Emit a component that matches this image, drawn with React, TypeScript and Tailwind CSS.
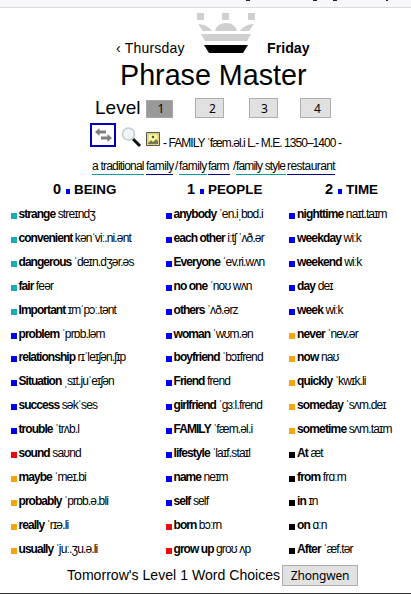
import React from "react";

type Entry = [string, string, string];
const T = "bg-[#14b0ae]", B = "bg-[#0000ee]", R = "bg-[#e80c10]", O = "bg-[#f9a40c]", K = "bg-black";

const being: Entry[] = [
  [T, "strange", "streɪndʒ"], [T, "convenient", "kənˈviː.ni.ənt"], [T, "dangerous", "ˈdeɪn.dʒər.əs"],
  [T, "fair", "feər"], [T, "Important", "ɪmˈpɔː.tənt"], [B, "problem", "ˈprɒb.ləm"],
  [B, "relationship", "rɪˈleɪʃən.ʃɪp"], [B, "Situation", "ˌsɪt.juˈeɪʃən"], [B, "success", "səkˈses"],
  [B, "trouble", "ˈtrʌb.l"], [R, "sound", "saʊnd"], [O, "maybe", "ˈmeɪ.bi"],
  [O, "probably", "ˈprɒb.ə.bli"], [O, "really", "ˈrɪə.li"], [O, "usually", "ˈjuː.ʒu.ə.li"],
];
const people: Entry[] = [
  [B, "anybody", "ˈen.iˌbɒd.i"], [B, "each other", "iːtʃ ˈʌð.ər"], [B, "Everyone", "ˈev.ri.wʌn"],
  [B, "no one", "ˈnoʊ wʌn"], [B, "others", "ˈʌð.ərz"], [B, "woman", "ˈwʊm.ən"],
  [B, "boyfriend", "ˈbɔɪfrend"], [B, "Friend", "frend"], [B, "girlfriend", "ˈɡɜːl.frend"],
  [B, "FAMILY", "ˈfæm.əl.i"], [B, "lifestyle", "ˈlaɪf.staɪl"], [B, "name", "neɪm"],
  [B, "self", "self"], [R, "born", "bɔːrn"], [R, "grow up", "groʊ ʌp"],
];
const time: Entry[] = [
  [B, "nighttime", "naɪt.taɪm"], [B, "weekday", "wiːk"], [B, "weekend", "wiːk"],
  [B, "day", "deɪ"], [B, "week", "wiːk"], [O, "never", "ˈnev.ər"],
  [O, "now", "naʊ"], [O, "quickly", "ˈkwɪk.li"], [O, "someday", "ˈsʌm.deɪ"],
  [O, "sometime", "sʌm.taɪm"], [K, "At", "æt"], [K, "from", "frɑːm"],
  [K, "in", "ɪn"], [K, "on", "ɑːn"], [K, "After", "ˈæf.tər"],
];

function Column({ items, gap, tracking }: { items: Entry[]; gap: string; tracking: string }) {
  return (
    <ul>
      {items.map(([color, word, ipa], i) => (
        <li key={i} className={"flex h-[23.93px] items-center whitespace-nowrap text-[12px] " + gap}>
          <i className={"mt-[4px] h-[6px] w-[6px] shrink-0 " + color} />
          <span><b className={tracking}>{word}</b><span className="tracking-[-0.85px]"> {ipa}</span></span>
        </li>
      ))}
    </ul>
  );
}

function Heading({ n, label, className }: { n: string; label: string; className: string }) {
  return (
    <h2 className={"flex h-6 items-center whitespace-nowrap text-[13.4px] font-bold " + className}>
      <span className="w-[9px] text-[14.5px]">{n}</span>
      <i className="mx-[4px] mt-[3px] h-[5px] w-[4px] bg-[#0000ee]" />
      {label}
    </h2>
  );
}

const level = "flex h-5 items-center justify-center border border-[#adadad] bg-[#e1e1e1] pt-px font-['Noto_Sans',sans-serif] text-[12px]";
const teal = "border-b border-[#00a0a0]";
const navy = "border-b border-[#000090]";

export default function App() {
  return (
    <main className="h-[594px] w-[411px] overflow-hidden bg-white font-['Liberation_Sans',Arial,sans-serif] text-black">
      <div className="flex h-2 border-b border-[#dcdcde] bg-[#f8f8fb] pl-[246px]">
        <i className="h-px w-1 bg-[#222]" />
        <i className="ml-[63px] h-px w-1 bg-[#222]" />
        <i className="ml-[16px] h-px w-1 bg-[#222]" />
        <i className="ml-[49px] h-px w-[2px] bg-[#222]" />
      </div>
      <header className="flex h-[48px] pl-[116px]">
        <span className="mt-[32px] w-[81px] whitespace-nowrap text-[14px] leading-4 tracking-[0.2px]">‹ Thursday</span>
        <svg className="mt-[4px] shrink-0" width="58" height="42" viewBox="0 0 58 42">
          <g fill="#cfcfcf"><path d="M0 1h7v7H0zM25 1h7v7h-7zM51 1h7v7h-7zM1 12q9 0 14 7H6zM57 12q-9 0-14 7h9zM18 19q2-8 11-8t11 8zM4 22h50l-4 7H8z" /></g>
          <path d="M7 33h44l-5 8H12z" />
        </svg>
        <b className="ml-[12px] mt-[32px] text-[14.2px] leading-4">Friday</b>
      </header>
      <h1 className="h-[38px] whitespace-nowrap pl-[120px] text-[28.7px] leading-[38px]">Phrase Master</h1>
      <div className="flex h-[27px] items-start pl-[95px] pt-1">
        <span className="w-[51px] text-[19px] leading-[20px]">Level</span>
        <button className="mt-[2px] flex h-[18px] w-[27px] items-center justify-center border border-[#a6a6a6] bg-[#999] pl-[3px] font-['Noto_Sans',sans-serif] text-[12px]">1</button>
        <button className={level + " ml-[22px] w-[29px] pl-[6px]"}>2</button>
        <button className={level + " ml-[25px] w-[29px] pl-[2px]"}>3</button>
        <button className={level + " ml-[22px] w-[31px] pl-[4px]"}>4</button>
      </div>
      <div className="flex h-[33px] pl-[90px] pt-[2px]">
        <div className="flex h-6 w-[26px] items-start justify-center border-2 border-[#0000b0] pt-[3px]">
          <svg width="17" height="14" viewBox="0 0 17 14" fill="#808080"><path d="M0 4l4.5-4v2.5H11v3H4.500V8zM17 10l-4.500-4v2.500H6v3h6.500V14z" /></svg>
        </div>
        <svg className="ml-[5px] mt-[4px]" width="21" height="21" viewBox="0 0 21 21" fill="none">
          <path d="M12 12l7 7" stroke="#111" strokeWidth="3" /><circle cx="7.5" cy="7" r="6" fill="#eef6fa" stroke="#c4ccd0" strokeWidth="1.5" />
        </svg>
        <svg className="ml-[4px] mt-[9px]" width="14" height="14" viewBox="0 0 14 14">
          <path d="M.5.5h13v13H.5z" fill="#eee48b" stroke="#555" /><path d="M2 2h10v10H2z" fill="#fff7a0" stroke="#a79e60" strokeWidth=".5" /><circle cx="7" cy="5" r="1.3" fill="#555" /><path d="M2 11l3-3 2 2 3-3 2 2v3H2z" fill="#777b50" />
        </svg>
        <span className="ml-[3px] mt-[12px] whitespace-nowrap text-[12px] leading-4 tracking-[-0.95px]">- FAMILY ˈfæm.əl.i L.- M.E. 1350–1400 -</span>
      </div>
      <div className="flex h-[24px] items-start whitespace-nowrap pl-[92px] pt-[5px] text-[12px] leading-[15px] tracking-[-0.85px]">
        <span className={teal + " mr-[2px] w-[52px] tracking-[-0.8px]"}>a traditional</span>
        <span className={navy + " w-[27px] tracking-[-0.6px]"}>family</span>
        <span className="w-[6px] pl-[2px]">/</span>
        <span className={teal + " mr-px w-[28px] tracking-[-0.6px]"}>family</span>
        <span className={navy + " w-[22px]"}>farm</span>
        <span className="w-[6px] pl-[3px]">/</span>
        <span className={teal + " mr-px w-[50px]"}>family style</span>
        <span className={navy + " w-[48px] tracking-[-0.6px]"}>restaurant</span>
      </div>
      <section className="grid h-[384px] grid-cols-[155px_123px_1fr] pl-[11px]">
        <div><Heading n="0" label="BEING" className="pl-[42px]" /><Column items={being} gap="gap-[1.5px]" tracking="tracking-[-0.95px]" /></div>
        <div><Heading n="1" label="PEOPLE" className="pl-[21px]" /><Column items={people} gap="gap-[1.5px]" tracking="tracking-[-0.95px]" /></div>
        <div><Heading n="2" label="TIME" className="pl-[36px]" /><Column items={time} gap="gap-[2px]" tracking="tracking-[-0.85px]" /></div>
      </section>
      <footer className="flex h-[32px] items-start border-b border-[#333] pl-[67px] pt-[3px]">
        <span className="w-[215px] whitespace-nowrap text-[14.1px] leading-[21px]">Tomorrow's Level 1 Word Choices</span>
        <button className="h-[21px] w-[76px] border border-[#adadad] bg-[#e1e1e1] font-['Noto_Sans',sans-serif] text-[12px] leading-[18px] tracking-[-0.2px]">Zhongwen</button>
      </footer>
    </main>
  );
}
